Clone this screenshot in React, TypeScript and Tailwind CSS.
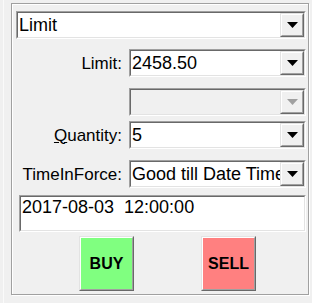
import React from "react";

const font = { fontFamily: '"Liberation Sans", Arial, sans-serif' };

function Arrow({ disabled }: { disabled?: boolean }) {
  return (
    <svg width="11" height="6" viewBox="0 0 11 6">
      <polygon points="0,0 11,0 5.5,6" fill={disabled ? "#a0a0a0" : "#000"} />
    </svg>
  );
}

function Combo({
  text,
  disabled,
  className,
}: {
  text?: string;
  disabled?: boolean;
  className: string;
}) {
  return (
    <div
      className={`${className} h-[28px] border-t border-l border-t-[#a0a0a0] border-l-[#a0a0a0] border-b border-r border-b-white border-r-white`}
    >
      <div className="h-full border-t border-l border-t-[#696969] border-l-[#696969] border-b border-r border-b-[#e3e3e3] border-r-[#e3e3e3] flex">
        <div
          className={`flex-1 min-w-0 overflow-hidden whitespace-nowrap flex items-center pl-[1px] text-[18px] text-black ${
            disabled ? "bg-[#f0f0f0]" : "bg-white"
          }`}
        >
          {text}
        </div>
        <div className="w-[24px] h-full border-t border-l border-t-[#e3e3e3] border-l-[#e3e3e3] border-b border-r border-b-[#696969] border-r-[#696969]">
          <div className="h-full border-t border-l border-t-white border-l-white border-b border-r border-b-[#a0a0a0] border-r-[#a0a0a0] bg-[#f0f0f0] flex items-center justify-center">
            <Arrow disabled={disabled} />
          </div>
        </div>
      </div>
    </div>
  );
}

function Label({ children }: { children: React.ReactNode }) {
  return (
    <div className="w-[110px] text-right text-[17px] text-black whitespace-nowrap pr-[0px] leading-none">
      {children}
    </div>
  );
}

function Btn({ label, color }: { label: string; color: string }) {
  return (
    <div className="w-[55px] h-[55px] border-t border-l border-t-[#e3e3e3] border-l-[#e3e3e3] border-b border-r border-b-[#696969] border-r-[#696969]">
      <div
        className={`h-full border-t border-l border-t-white border-l-white border-b border-r border-b-[#a0a0a0] border-r-[#a0a0a0] ${color} flex items-center justify-center text-[16px] font-bold text-black`}
      >
        {label}
      </div>
    </div>
  );
}

export default function App() {
  return (
    <div
      className="w-[312px] h-[303px] bg-[#f0f0f0] pt-[3px] pl-[11px] shadow-[inset_3px_0_0_#f0f0f0,inset_4px_0_0_#fafafa]"
      style={font}
    >
      <div className="w-[298px] h-[292px] border border-[#a0a0a0] shadow-[1px_1px_0_#fff,inset_1px_1px_0_#fff] flex flex-col">
        <Combo text="Limit" className="ml-[4px] mt-[7px] w-[290px]" />
        <div className="mt-[10px] flex items-center">
          <Label>Limit:</Label>
          <Combo text="2458.50" className="ml-[7px] w-[177px]" />
        </div>
        <div className="mt-[11px] flex items-center">
          <div className="w-[110px]" />
          <Combo disabled className="ml-[7px] w-[177px]" />
        </div>
        <div className="mt-[5px] flex items-center">
          <Label>
            <u>Q</u>uantity:
          </Label>
          <Combo text="5" className="ml-[7px] w-[177px]" />
        </div>
        <div className="mt-[11px] flex items-center">
          <Label>TimeInForce:</Label>
          <Combo text="Good till Date Time" className="ml-[7px] w-[177px]" />
        </div>
        <div className="mt-[7px] ml-[7px] w-[287px] h-[37px] border-t border-l border-t-[#a0a0a0] border-l-[#a0a0a0] border-b border-r border-b-white border-r-white">
          <div className="h-full border-t border-l border-t-[#696969] border-l-[#696969] border-b border-r border-b-[#e3e3e3] border-r-[#e3e3e3] bg-white text-[18px] leading-[21px] pl-[1px] text-black whitespace-pre">
            {"2017-08-03  12:00:00"}
          </div>
        </div>
        <div className="mt-[4px] ml-[67px] flex gap-[67px]">
          <Btn label="BUY" color="bg-[#80ff80]" />
          <Btn label="SELL" color="bg-[#ff8080]" />
        </div>
      </div>
    </div>
  );
}
